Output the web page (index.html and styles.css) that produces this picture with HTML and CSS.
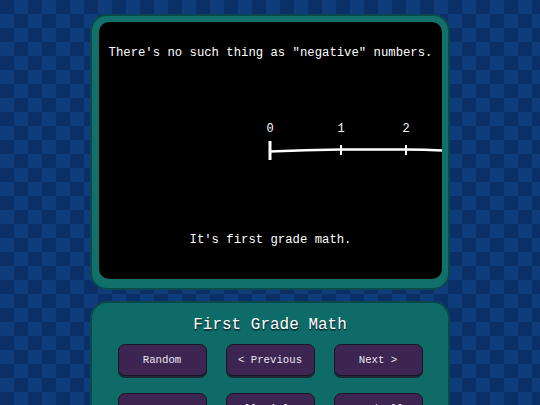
FILE: index.html
```html
<!DOCTYPE html>
<html lang="en">
<head>
  <meta charset="UTF-8">
  <title>First Grade Math</title>
  <link rel="stylesheet" href="styles.css">
</head>
<body>
  <div class="viewer">
    <!-- comic screen -->
    <div class="frame">
      <div class="screen">
        <p class="caption">There's no such thing as "negative" numbers.</p>
        <svg class="number-line" width="342" height="50" viewBox="0 0 342 50">
          <text x="170" y="17">0</text>
          <text x="241" y="17">1</text>
          <text x="306" y="17">2</text>
          <path class="axis" d="M170 36.5 Q205 35 241 34.5 L306 34.5 Q325 34.5 342 35.5" />
          <path class="tick zero" d="M170 26 V45" />
          <path class="tick" d="M241 30 V40" />
          <path class="tick" d="M306 30 V40" />
        </svg>
        <p class="caption lower">It's first grade math.</p>
      </div>
    </div>

    <!-- controls -->
    <div class="controls">
      <h1 class="title">First Grade Math</h1>
      <div class="buttons">
        <button class="btn">Random</button>
        <button class="btn">&lt; Previous</button>
        <button class="btn">Next &gt;</button>
        <button class="btn">Home</button>
        <button class="btn">All Titles</button>
        <button class="btn">Load All</button>
      </div>
    </div>
  </div>
</body>
</html>
```

FILE: styles.css
```css
html, body {
  margin: 0;
  height: 100%;
}
body {
  background-color: #0b3068;
  background-image: conic-gradient(#0f3c7b 25%, transparent 0 50%, #0f3c7b 0 75%, transparent 0);
  background-size: 28px 28px;
  font-family: "Liberation Mono", "DejaVu Sans Mono", monospace;
  color: #fff;
  overflow: hidden;
}
.viewer {
  width: 360px;
  margin: 14px auto 0;
  display: flex;
  flex-direction: column;
  gap: 11px;
}
.frame {
  background: #12706b;
  border: 2px solid #0a4a4c;
  border-radius: 17px;
  padding: 6px 6px 9px 7px;
}
.screen {
  background: #000;
  height: 257px;
  border-radius: 10px;
  display: flex;
  flex-direction: column;
  align-items: center;
}
.caption {
  margin: 23px 0 0;
  font-size: 12.27px;
  line-height: 16px;
  white-space: pre;
}
.caption.lower {
  margin-top: 67px;
}
.number-line {
  display: block;
  margin-top: 54px;
}
.number-line text {
  fill: #fff;
  font-family: "Liberation Mono", "DejaVu Sans Mono", monospace;
  font-size: 12px;
  text-anchor: middle;
}
.axis {
  fill: none;
  stroke: #fff;
  stroke-width: 2.5;
}
.tick {
  stroke: #fff;
  stroke-width: 2;
}
.tick.zero {
  stroke-width: 3;
}
.controls {
  background: #0f6b67;
  border: 2px solid #0a4a4c;
  border-radius: 17px;
  padding: 12px 0 40px;
}
.title {
  margin: 0;
  font-size: 16px;
  line-height: 20px;
  font-weight: normal;
  text-align: center;
  text-shadow: 1px 1px 0 #093b3c, 0 2px 0 #093b3c;
}
.buttons {
  display: grid;
  grid-template-columns: repeat(3, 89px);
  column-gap: 19px;
  row-gap: 17px;
  justify-content: center;
  margin-top: 9px;
}
.btn {
  height: 32px;
  background: #3c2551;
  border: 1.5px solid #1d1329;
  border-radius: 7px;
  box-shadow: 0 2px 0 #1b2a36;
  color: #ece6f2;
  font-family: "Liberation Mono", "DejaVu Sans Mono", monospace;
  font-size: 10.7px;
  padding: 0;
}
```
